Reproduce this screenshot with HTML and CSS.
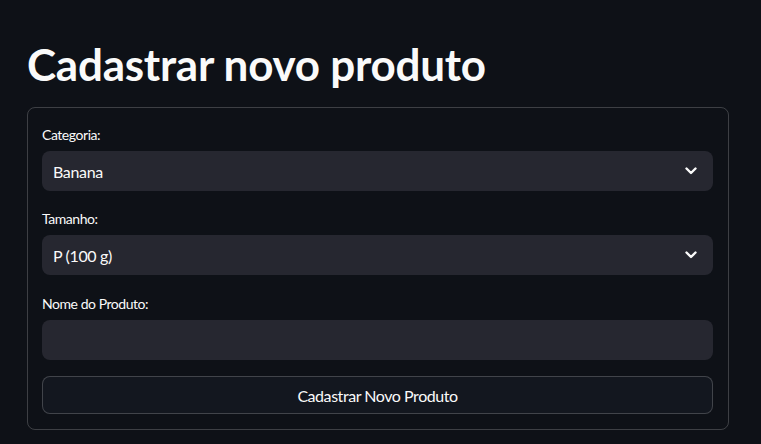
FILE: index.html
```html
<!DOCTYPE html>
<html lang="pt">
<head>
<meta charset="utf-8">
<title>Cadastrar novo produto</title>
<link rel="stylesheet" href="styles.css">
</head>
<body>
<main class="page">
  <h1 class="title">Cadastrar novo produto</h1>
  <form class="form">
    <div class="field">
      <label class="label">Categoria:</label>
      <div class="select">
        <span class="select-value">Banana</span>
        <svg class="chevron" width="12" height="8" viewBox="0 0 12 8"><path d="M1.5 1.5 L6 6 L10.5 1.5" fill="none" stroke="#fafafa" stroke-width="2.4" stroke-linecap="round" stroke-linejoin="round"/></svg>
      </div>
    </div>
    <div class="field">
      <label class="label">Tamanho:</label>
      <div class="select">
        <span class="select-value">P (100 g)</span>
        <svg class="chevron" width="12" height="8" viewBox="0 0 12 8"><path d="M1.5 1.5 L6 6 L10.5 1.5" fill="none" stroke="#fafafa" stroke-width="2.4" stroke-linecap="round" stroke-linejoin="round"/></svg>
      </div>
    </div>
    <div class="field field-text">
      <label class="label">Nome do Produto:</label>
      <div class="input"></div>
    </div>
    <button type="button" class="button">Cadastrar Novo Produto</button>
  </form>
</main>
</body>
</html>
```
FILE: styles.css
```css
html, body {
  margin: 0;
  padding: 0;
  background: #0e1117;
  color: #fafafa;
  font-family: "Lato", "Noto Sans", sans-serif;
}
.page {
  padding: 30px 32px 0 27px;
}
.title {
  margin: 0;
  font-size: 44px;
  font-weight: 700;
  line-height: 53px;
  padding: 8px 0 16px;
  letter-spacing: -0.25px;
}
.form {
  border: 1px solid rgba(250, 250, 250, 0.2);
  border-radius: 8px;
  padding: 15px 15px 15px 14px;
  display: flex;
  flex-direction: column;
  gap: 16px;
}
.field {
  display: flex;
  flex-direction: column;
}
.field-text {
  padding-top: 1px;
}
.label {
  font-size: 14px;
  line-height: 24px;
  height: 24px;
  margin-bottom: 4px;
  letter-spacing: -0.45px;
}
.select, .input {
  height: 40px;
  background: #262730;
  border-radius: 8px;
  display: flex;
  align-items: center;
  justify-content: space-between;
  padding: 0 16px 0 11px;
}
.select-value {
  font-size: 16px;
  letter-spacing: -0.35px;
}
.chevron {
  display: block;
}
.button {
  height: 38px;
  background: #13171f;
  border: 1px solid rgba(250, 250, 250, 0.2);
  border-radius: 8px;
  color: #fafafa;
  font-family: inherit;
  font-size: 16px;
  letter-spacing: -0.45px;
}
```
